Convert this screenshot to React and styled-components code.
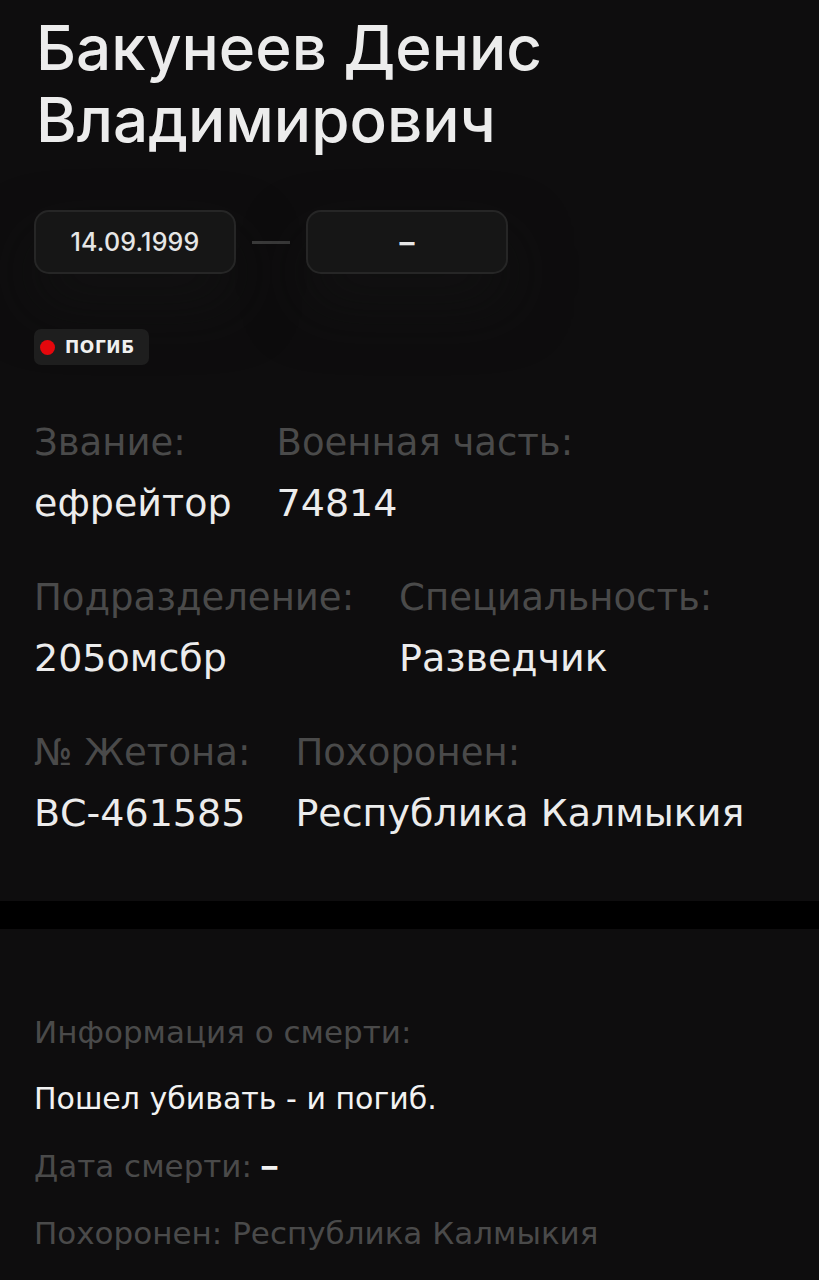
import React from "react";
import styled, { createGlobalStyle } from "styled-components";

const GlobalStyle = createGlobalStyle`
  html, body {
    margin: 0;
    padding: 0;
    background: #000;
  }
  body {
    font-family: "DejaVu Sans", "Noto Sans", sans-serif;
    color: #ececec;
  }
`;

const Page = styled.div`
  width: 819px;
  min-height: 1280px;
  background: #000;
  display: flex;
  flex-direction: column;
  gap: 28px;
`;

const Section = styled.section`
  background: #0e0d0e;
  padding: ${p => p.$pad};
`;

const Name = styled.h1`
  margin: 0;
  font-family: Inter, "Noto Sans", sans-serif;
  font-size: 62px;
  line-height: 72px;
  font-weight: 500;
  color: #ececec;
  padding-left: 2px;
`;

const Dates = styled.div`
  display: flex;
  align-items: center;
  gap: 16px;
  margin-top: 54px;
`;

const DateBox = styled.div`
  width: 202px;
  height: 64px;
  box-sizing: border-box;
  border: 2px solid #262626;
  border-radius: 15px;
  background: #161616;
  display: flex;
  align-items: center;
  justify-content: center;
  font-family: Inter, "Noto Sans", sans-serif;
  font-size: ${p => (p.$empty ? 30 : 25)}px;
  font-weight: ${p => (p.$empty ? 600 : 500)};
  letter-spacing: 0.2px;
  color: #e6e6e6;
  box-shadow: 0 30px 60px rgba(20, 20, 20, 0.6);
`;

const Dash = styled.div`
  width: 38px;
  height: 3px;
  background: #3a3a3a;
`;

const Badge = styled.div`
  display: inline-flex;
  align-items: center;
  gap: 10px;
  margin-top: 55px;
  padding: 0 14px 0 6px;
  height: 36px;
  border-radius: 7px;
  background: #1e1e1e;
  font-size: 17px;
  font-weight: 700;
  letter-spacing: 0.6px;
  color: #f0f0f0;
`;

const Dot = styled.span`
  width: 15px;
  height: 15px;
  border-radius: 50%;
  background: #e5070c;
`;

const Row = styled.div`
  display: flex;
  gap: 45px;
  margin-top: ${p => p.$top}px;
`;

const Field = styled.div`
  display: flex;
  flex-direction: column;
  gap: 20px;
`;

const Label = styled.span`
  font-size: 37px;
  line-height: 40px;
  color: #4a4a4a;
`;

const Value = styled.span`
  font-size: 38px;
  line-height: 40px;
  color: #ececec;
`;

const InfoLine = styled.p`
  margin: 0;
  font-size: ${p => (p.$muted ? 31 : 30)}px;
  line-height: 34px;
  color: ${p => (p.$muted ? "#4a4a4a" : "#f2f2f2")};
`;

const Accent = styled.span`
  font-family: Inter, "Noto Sans", sans-serif;
  color: #f2f2f2;
  font-weight: 700;
`;

const InfoList = styled.div`
  display: flex;
  flex-direction: column;
  gap: 33px;
`;

const fields = [
  [
    ["Звание:", "ефрейтор"],
    ["Военная часть:", "74814"],
  ],
  [
    ["Подразделение:", "205омсбр"],
    ["Специальность:", "Разведчик"],
  ],
  [
    ["№ Жетона:", "ВС-461585"],
    ["Похоронен:", "Республика Калмыкия"],
  ],
];

export default function App() {
  return (
    <Page>
      <GlobalStyle />
      <Section $pad="12px 34px 68px">
        <Name>
          Бакунеев Денис
          <br />
          Владимирович
        </Name>
        <Dates>
          <DateBox>14.09.1999</DateBox>
          <Dash />
          <DateBox $empty>–</DateBox>
        </Dates>
        <Badge>
          <Dot />
          ПОГИБ
        </Badge>
        {fields.map((row, i) => (
          <Row key={i} $top={i === 0 ? 58 : 55}>
            {row.map(([label, value]) => (
              <Field key={label}>
                <Label>{label}</Label>
                <Value>{value}</Value>
              </Field>
            ))}
          </Row>
        ))}
      </Section>
      <Section $pad="86px 34px 40px">
        <InfoList>
          <InfoLine $muted>Информация о смерти:</InfoLine>
          <InfoLine>Пошел убивать - и погиб.</InfoLine>
          <InfoLine $muted>
            Дата смерти: <Accent>–</Accent>
          </InfoLine>
          <InfoLine $muted>Похоронен: Республика Калмыкия</InfoLine>
        </InfoList>
      </Section>
    </Page>
  );
}
